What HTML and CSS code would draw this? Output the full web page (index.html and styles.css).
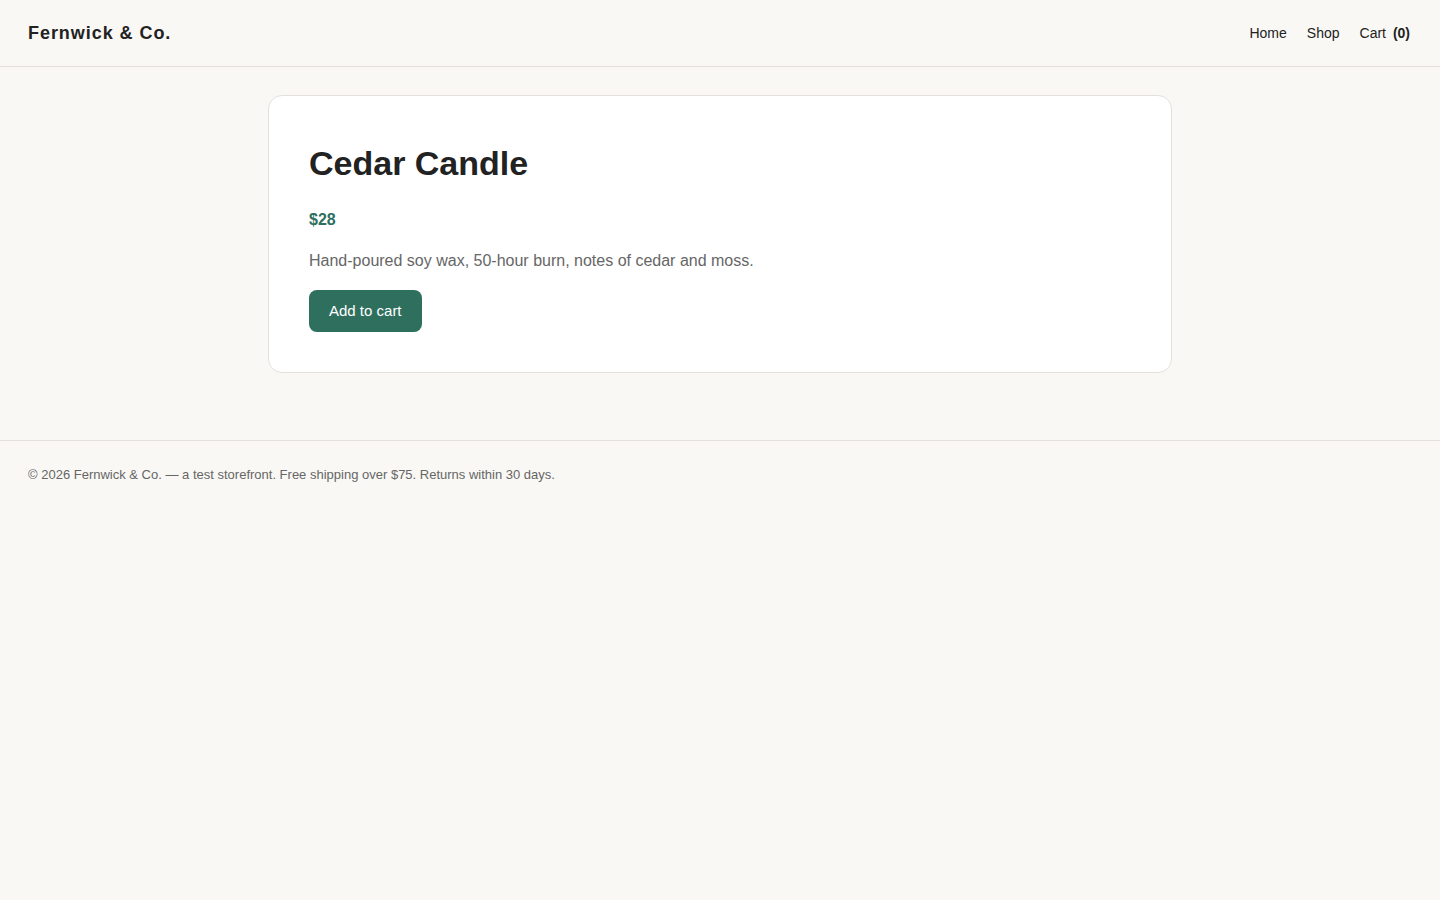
FILE: index.html
```html
<!DOCTYPE html>
<html lang="en">
<head>
<meta charset="utf-8">
<title>Cedar Candle — Fernwick &amp; Co.</title>
<link rel="stylesheet" href="styles.css">
</head>
<body>
<header class="site-header">
  <a class="brand" href="#">Fernwick &amp; Co.</a>
  <nav class="nav">
    <a href="#">Home</a>
    <a href="#">Shop</a>
    <a href="#">Cart <span class="count">(0)</span></a>
  </nav>
</header>
<main class="main">
  <section class="card">
    <h1 class="title">Cedar Candle</h1>
    <p class="price">$28</p>
    <p class="desc">Hand-poured soy wax, 50-hour burn, notes of cedar and moss.</p>
    <button class="btn" type="button">Add to cart</button>
  </section>
</main>
<footer class="site-footer">
  <p>© 2026 Fernwick &amp; Co. — a test storefront. Free shipping over $75. Returns within 30 days.</p>
</footer>
</body>
</html>
```

FILE: styles.css
```css
* { box-sizing: border-box; }
html, body { margin: 0; padding: 0; }
body {
  background: #f9f8f5;
  color: #222;
  font-family: "Liberation Sans", Arial, sans-serif;
}
a { color: inherit; text-decoration: none; }

.site-header {
  height: 67px;
  display: flex;
  align-items: center;
  justify-content: space-between;
  padding: 0 30px 0 28px;
  border-bottom: 1px solid #e4e1db;
}
.brand {
  font-size: 18px;
  font-weight: 700;
  letter-spacing: 0.95px;
  color: #222;
}
.nav {
  display: flex;
  gap: 20px;
  font-size: 14px;
  color: #222;
}
.count { font-weight: 700; margin-left: 3px; }

.main {
  max-width: 960px;
  margin: 0 auto;
  padding: 28px 28px 67px;
}
.card {
  background: #fff;
  border: 1px solid #e4e1db;
  border-radius: 14px;
  padding: 40px;
}
.title {
  margin: 7px 0 24px;
  font-size: 34px;
  line-height: 1.2;
  font-weight: 700;
  color: #222;
}
.price {
  margin: 0 0 17px;
  font-size: 16px;
  line-height: 24px;
  font-weight: 700;
  color: #2f6f5e;
}
.desc {
  margin: 0 0 17px;
  font-size: 16px;
  line-height: 24px;
  color: #666;
}
.btn {
  display: block;
  font-family: inherit;
  font-size: 15px;
  line-height: 18px;
  padding: 12px 20px;
  color: #fff;
  background: #2f6f5e;
  border: 0;
  border-radius: 8px;
  cursor: pointer;
}

.site-footer {
  border-top: 1px solid #e4e1db;
  padding: 24px 28px;
  font-size: 13px;
  line-height: 1.5;
  color: #666;
}
.site-footer p { margin: 0; }
```
